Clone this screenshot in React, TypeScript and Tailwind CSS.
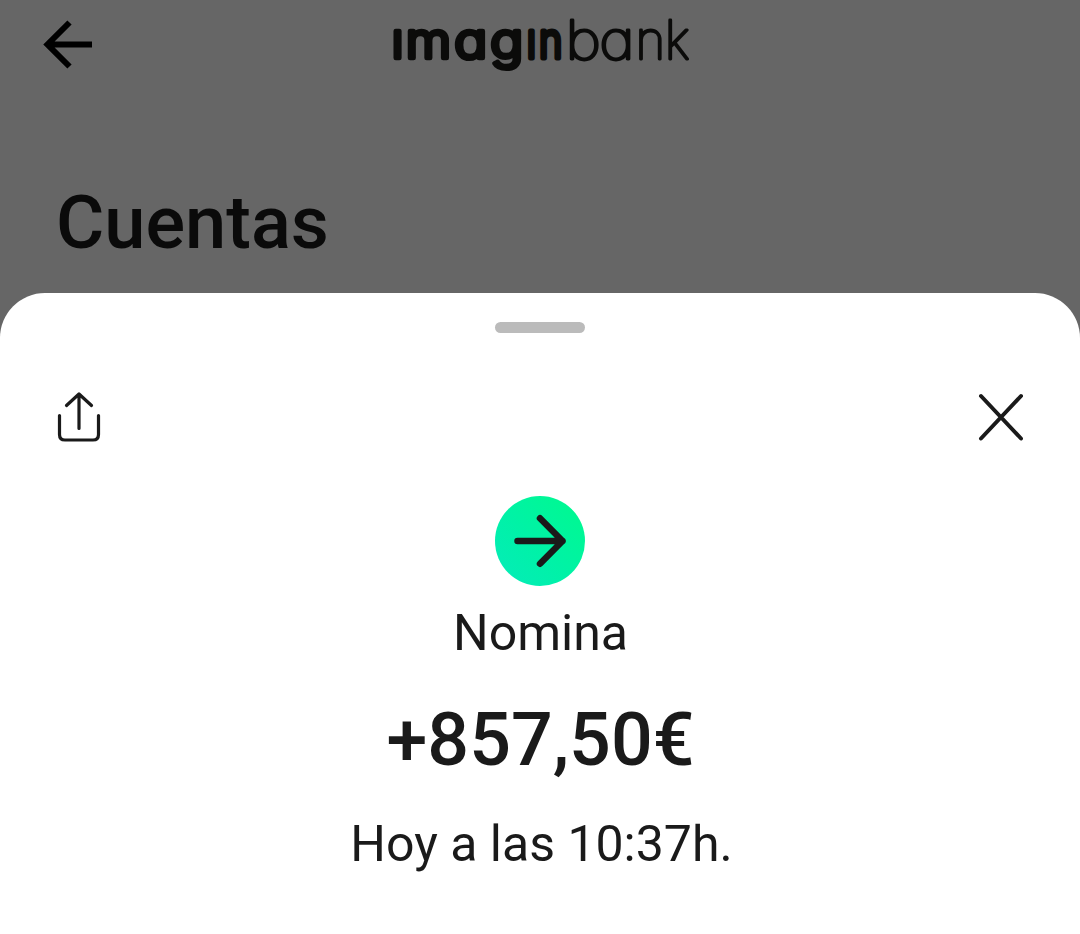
const ArrowLeft = () => (
  <svg className="h-[50px] w-[50px]" viewBox="0 0 50 50" fill="none" stroke="#000" strokeWidth="6">
    <path d="M49 24.5H5M26.5 2.5L4.5 24.5L26.5 46.5" />
  </svg>
);

const Wordmark = () => (
  <svg
    role="img"
    aria-label="imaginbank"
    className="h-[60px] w-[300px] overflow-visible"
    viewBox="0 0 300 60"
    fill="#0b0b0a"
    stroke="#0b0b0a"
    strokeLinejoin="round"
    fontFamily="Inter, sans-serif"
    style={{ fontFeatureSettings: '"cv11" 1' }}
  >
    <g fontSize="48.5" fontWeight="300" strokeWidth="4.4">
      <text transform="translate(0 41) scale(1.07 1)" x="1.3 14.8">
        ım
      </text>
      <text transform="translate(64 41) scale(1.13 1)" x="0.3 32">
        ag
      </text>
      <text transform="translate(136 41) scale(0.82 1)" x="0.8 16" strokeWidth="5">
        ın
      </text>
    </g>
    <g fontSize="53" fontWeight="100" strokeWidth="2.8">
      <text transform="translate(175.5 41.7) scale(1.15 1)" x="0 29.3">
        ba
      </text>
      <text transform="translate(245.5 41.7) scale(0.96 1)" x="0 30.5">
        nk
      </text>
    </g>
  </svg>
);

const ShareIcon = () => (
  <svg
    className="h-[52px] w-[46px]"
    viewBox="0 0 46 52"
    fill="none"
    stroke="#1a1a1a"
    strokeWidth="3.2"
    strokeLinecap="round"
    strokeLinejoin="round"
  >
    <path d="M23 37.5V3M10.5 14.5L23 3L35.5 14.5" />
    <path d="M3.5 24.5V43.5Q3.5 49 9 49H37Q42.5 49 42.5 43.5V24.5" />
  </svg>
);

const CloseIcon = () => (
  <svg
    className="h-[50px] w-[48px]"
    viewBox="0 0 48 50"
    fill="none"
    stroke="#1a1a1a"
    strokeWidth="4"
    strokeLinecap="round"
  >
    <path d="M5 4L45 46.5M45 4L5 46.5" />
  </svg>
);

const ArrowRight = () => (
  <svg
    className="h-[90px] w-[90px]"
    viewBox="0 0 90 90"
    fill="none"
    stroke="#1a1a1a"
    strokeWidth="6.5"
    strokeLinecap="round"
    strokeLinejoin="round"
  >
    <path d="M22.5 45H67.5M45 22.3L67.5 45L45 67.7" />
  </svg>
);

const App = () => {
  return (
    <div className="flex h-[934px] w-[1080px] flex-col overflow-hidden bg-[#666] font-['Roboto',sans-serif] text-[#1a1a1a]">
      <header className="grid h-[90px] grid-cols-3 px-[43px] pt-[17px]">
        <button aria-label="Volver" className="h-[50px] w-[50px] pt-[3px]">
          <ArrowLeft />
        </button>
        <div className="flex justify-center">
          <Wordmark />
        </div>
      </header>

      <h1 className="mt-[88px] h-[115px] pl-[56px] text-[74px] leading-[89px] font-medium text-[#0a0a0a]">
        Cuentas
      </h1>

      <main className="flex flex-1 flex-col items-center rounded-t-[45px] bg-white">
        <div className="mt-[29px] h-[11px] w-[90px] rounded-full bg-[#bbb]" />

        <div className="mt-[58px] flex w-full justify-between px-[56px]">
          <button aria-label="Compartir">
            <ShareIcon />
          </button>
          <button aria-label="Cerrar">
            <CloseIcon />
          </button>
        </div>

        <div className="mt-[53px] h-[90px] w-[90px] rounded-full bg-linear-to-tr from-[#06ebba] to-[#00fa8c]">
          <ArrowRight />
        </div>

        <p className="mt-[17px] pl-px text-[50px] leading-[60px]">Nomina</p>
        <p className="mt-[33px] pl-px text-[73.5px] leading-[88px] font-medium">+857,50€</p>
        <p className="mt-[30px] pl-[3px] text-[50px] leading-[60px]">Hoy a las 10:37h.</p>
      </main>
    </div>
  );
};

export default App;
